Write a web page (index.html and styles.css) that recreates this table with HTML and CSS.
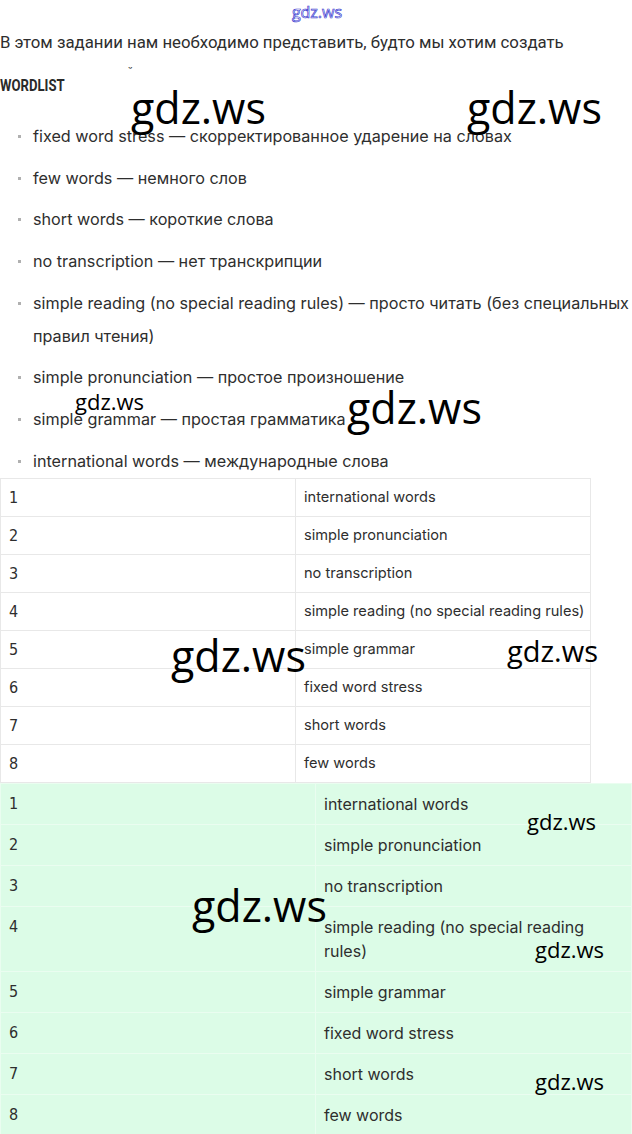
FILE: index.html
```html
<!DOCTYPE html>
<html lang="ru">
<head>
<meta charset="utf-8">
<title>WORDLIST</title>
<link rel="stylesheet" href="styles.css">
</head>
<body>
<div class="page">
  <div class="top-logo">gdz.ws</div>
  <p class="intro">В этом задании нам необходимо представить, будто мы хотим создать</p>
  <div class="tilde">˘</div>
  <h3 class="wordlist"><span>WORDLIST</span></h3>
  <ul class="words">
    <li>fixed word stress — скорректированное ударение на словах</li>
    <li>few words — немного слов</li>
    <li>short words — короткие слова</li>
    <li>no transcription — нет транскрипции</li>
    <li>simple reading (no special reading rules) — просто читать (без специальных правил чтения)</li>
    <li>simple pronunciation — простое произношение</li>
    <li>simple grammar — простая грамматика</li>
    <li>international words — международные слова</li>
  </ul>
  <table class="tbl tbl-plain">
    <tr><td class="num">1</td><td>international words</td></tr>
    <tr><td class="num">2</td><td>simple pronunciation</td></tr>
    <tr><td class="num">3</td><td>no transcription</td></tr>
    <tr><td class="num">4</td><td>simple reading (no special reading rules)</td></tr>
    <tr><td class="num">5</td><td>simple grammar</td></tr>
    <tr><td class="num">6</td><td>fixed word stress</td></tr>
    <tr><td class="num">7</td><td>short words</td></tr>
    <tr><td class="num">8</td><td>few words</td></tr>
  </table>
  <table class="tbl tbl-green">
    <tr><td class="num">1</td><td>international words</td></tr>
    <tr><td class="num">2</td><td>simple pronunciation</td></tr>
    <tr><td class="num">3</td><td>no transcription</td></tr>
    <tr><td class="num">4</td><td>simple reading (no special reading rules)</td></tr>
    <tr><td class="num">5</td><td>simple grammar</td></tr>
    <tr><td class="num">6</td><td>fixed word stress</td></tr>
    <tr><td class="num">7</td><td>short words</td></tr>
    <tr><td class="num">8</td><td>few words</td></tr>
  </table>

  <span class="wm wm-l wm1">gdz.ws</span>
  <span class="wm wm-l wm2">gdz.ws</span>
  <span class="wm wm-s wm3">gdz.ws</span>
  <span class="wm wm-l wm4">gdz.ws</span>
  <span class="wm wm-l wm5">gdz.ws</span>
  <span class="wm wm-m wm6">gdz.ws</span>
  <span class="wm wm-s wm7">gdz.ws</span>
  <span class="wm wm-l wm8">gdz.ws</span>
  <span class="wm wm-s wm9">gdz.ws</span>
  <span class="wm wm-s wm10">gdz.ws</span>
</div>
</body>
</html>
```
FILE: styles.css
```css
html, body {
  margin: 0;
  padding: 0;
  background: #ffffff;
}

.page {
  position: relative;
  width: 632px;
  font-family: Inter, "Noto Sans", sans-serif;
  color: #2e2e2e;
}

.top-logo {
  height: 24px;
  line-height: 24px;
  text-align: center;
  font-family: "Open Sans", sans-serif;
  font-size: 16px;
  color: #ffffff;
  -webkit-text-stroke: 0.7px #3a3ad0;
  padding-left: 2px;
}

.intro {
  margin: 6px 0 0;
  font-family: Roboto, sans-serif;
  font-size: 16.8px;
  line-height: 24px;
}

.tilde {
  height: 22px;
  line-height: 36px;
  font-size: 12px;
  padding-left: 128px;
}

.wordlist {
  margin: 0;
  font-family: Roboto, sans-serif;
  font-weight: bold;
  font-size: 16px;
  line-height: 20px;
  color: #2a2a2a;
}

.wordlist span {
  display: inline-block;
  transform: scaleX(0.82);
  transform-origin: left center;
}

.words {
  list-style: none;
  margin: 24px 0 0;
  padding: 0 0 0 33px;
  font-size: 16.2px;
}

.words li {
  position: relative;
  line-height: 33px;
  margin-bottom: 8.7px;
}

.words li:last-child {
  margin-bottom: 0;
}

.words li::before {
  content: "";
  position: absolute;
  left: -15px;
  top: 15px;
  width: 3px;
  height: 3px;
  background: #b0b0b0;
}

.tbl {
  border-collapse: collapse;
  table-layout: fixed;
}

.tbl td {
  vertical-align: top;
  padding: 8px;
}

.tbl .num {
  font-family: "DejaVu Sans", sans-serif;
  font-stretch: condensed;
  font-size: 16px;
}

.tbl-plain {
  width: 591px;
  font-size: 14.6px;
}

.tbl-plain td {
  border: 1px solid #e8e8e8;
  line-height: 21px;
  white-space: nowrap;
}

.tbl-plain .num {
  width: 278px;
}

.tbl-green {
  width: 632px;
  background: #dcfce7;
  font-size: 16px;
}

.tbl-green td {
  border: 1px solid #eafdf0;
  line-height: 24px;
}

.tbl-green .num {
  width: 298px;
}

.wm {
  position: absolute;
  font-family: "Open Sans", sans-serif;
  color: #000000;
  line-height: 1;
  white-space: nowrap;
}

.wm-l { font-size: 43px; }
.wm-m { font-size: 29px; }
.wm-s { font-size: 22px; }

.wm1 { left: 131px; top: 86px; }
.wm2 { left: 467px; top: 86px; }
.wm3 { left: 75px; top: 390px; }
.wm4 { left: 347px; top: 386px; }
.wm5 { left: 171px; top: 634px; }
.wm6 { left: 507px; top: 636px; }
.wm7 { left: 527px; top: 810px; }
.wm8 { left: 192px; top: 884px; }
.wm9 { left: 535px; top: 938px; }
.wm10 { left: 535px; top: 1070px; }
```
